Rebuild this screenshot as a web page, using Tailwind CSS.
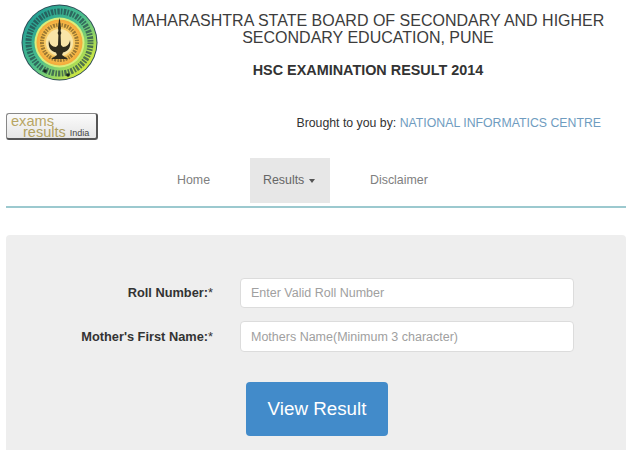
<!doctype html>
<html>
<head>
<meta charset="utf-8">
<script src="https://cdn.jsdelivr.net/npm/@tailwindcss/browser@4"></script>
</head>
<body class="bg-white overflow-hidden">
<div class="w-[626px] h-[450px] overflow-hidden font-['Liberation_Sans',Arial,sans-serif] text-[#333]">
  <!-- header -->
  <div class="flex h-[88px]">
    <div class="w-[120px] pl-[21px] pt-[4px] shrink-0">
      <svg width="77" height="77" viewBox="0 0 77 77">
        <defs>
          <linearGradient id="ring" x1="0.1" y1="0.1" x2="0.9" y2="0.9">
            <stop offset="0" stop-color="#1f9c94"/>
            <stop offset="0.5" stop-color="#4fc08c"/>
            <stop offset="1" stop-color="#e4ee35"/>
          </linearGradient>
          <radialGradient id="sun">
            <stop offset="0.3" stop-color="#fbe9a8"/>
            <stop offset="0.75" stop-color="#f7c04e"/>
            <stop offset="1" stop-color="#f4a93a"/>
          </radialGradient>
        </defs>
        <circle cx="38.5" cy="38.5" r="38" fill="#2b4a55"/>
        <circle cx="38.5" cy="38.5" r="37" fill="url(#ring)"/>
        <circle cx="38.5" cy="38.5" r="31" fill="none" stroke="#24464a" stroke-width="6" stroke-dasharray="1.6 1.3 2.4 1.1" opacity="0.7"/>
        <circle cx="38.5" cy="38.5" r="25" fill="#d8ee7c"/>
        <circle cx="38.5" cy="38.5" r="23" fill="url(#sun)"/>
        <circle cx="38.5" cy="38.5" r="17.5" fill="none" stroke="#6b5324" stroke-width="4" stroke-dasharray="1.4 1.2 2 1" opacity="0.65"/>
        <circle cx="38.5" cy="38.5" r="13.5" fill="#f8e5a8"/>
        <path d="M38.5 14 C39.6 18 39.4 21 40 24 L39.6 27 L40.4 29 L39.6 31 L40 41 L42 43 C46 43 48.5 40 49 36 C50.5 44 46.5 47.5 42 48.5 L41 51 L47 55 L30 55 L36 51 L35 48.5 C30.5 47.5 26.5 44 28 36 C28.5 40 31 43 35 43 L37 41 L37.4 31 L36.6 29 L37.4 27 L37 24 C37.6 21 37.4 18 38.5 14 Z" fill="#2f2c1c"/>
        <circle cx="24" cy="67" r="1.8" fill="#16261c"/>
        <circle cx="47" cy="71" r="1.8" fill="#16261c"/>
      </svg>
    </div>
    <div class="w-[496px] text-center pt-[12px]">
      <h1 class="text-[16px] leading-[17px] font-normal text-[#3c3c3c]">MAHARASHTRA STATE BOARD OF SECONDARY AND HIGHER<br>SECONDARY EDUCATION, PUNE</h1>
      <h2 class="mt-[16px] text-[14.4px] leading-[17px] font-bold text-[#333]">HSC EXAMINATION RESULT 2014</h2>
    </div>
  </div>
  <!-- brought by row -->
  <div class="flex justify-between h-[70px] pt-[25px] pl-[6px] pr-[25px]">
    <div class="flex flex-col w-[92px] h-[27px] rounded-[3px] border border-[#888] border-r-2 border-b-2 border-r-[#555] border-b-[#555] bg-gradient-to-b from-[#fbfbfb] to-[#e6e6e6] pt-[2px] pl-[4px]">
      <span class="text-[14.6px] leading-[11px] text-[#b8a664]">exams</span>
      <span class="flex items-end gap-[4px] pl-[12px]">
        <span class="text-[14.5px] leading-[11px] text-[#b0a05e]">results</span>
        <span class="text-[9px] leading-[9px] text-[#444]">India</span>
      </span>
    </div>
    <p class="text-[12.3px] leading-[20px] text-[#333]">Brought to you by: <span class="text-[#6f9cc0]">NATIONAL INFORMATICS CENTRE</span></p>
  </div>
  <!-- nav -->
  <nav class="ml-[6px] h-[50px] border-b-2 border-[#9cc9cf] flex items-start pl-[158px] text-[12.4px] text-[#808080]">
    <a class="w-[86px] h-[45px] pl-[13px] leading-[45px]">Home</a>
    <a class="w-[80px] h-[45px] bg-[#e7e7e7] text-[#666] pl-[13px] leading-[45px] flex items-center gap-[5px]">Results <span class="w-0 h-0 border-x-[3.5px] border-x-transparent border-t-[4px] border-t-[#555]"></span></a>
    <a class="ml-[40px] leading-[45px]">Disclaimer</a>
  </nav>
  <!-- form -->
  <div class="ml-[6px] mt-[27px] h-[240px] rounded-[4px] bg-[#eeeeee] pt-[43px]">
    <div class="flex items-center h-[30px]">
      <label class="w-[207px] text-right text-[12.8px] font-bold text-[#333]">Roll Number:<span class="font-normal">*</span></label>
      <input class="ml-[27px] w-[334px] h-[30px] px-[10px] rounded-[4px] bg-white border border-[#dcdcdc] text-[12.5px] placeholder:text-[#a0a0a0]" placeholder="Enter Valid Roll Number">
    </div>
    <div class="flex items-center h-[31px] mt-[13px]">
      <label class="w-[207px] text-right text-[12.8px] font-bold text-[#333]">Mother's First Name:<span class="font-normal">*</span></label>
      <input class="ml-[27px] w-[334px] h-[31px] px-[10px] rounded-[4px] bg-white border border-[#dcdcdc] text-[12.5px] placeholder:text-[#a0a0a0]" placeholder="Mothers Name(Minimum 3 character)">
    </div>
    <button class="block ml-[240px] mt-[30px] w-[142px] h-[54px] rounded-[4px] bg-[#428bca] text-white text-[18.8px]">View Result</button>
  </div>
</div>
</body>
</html>
